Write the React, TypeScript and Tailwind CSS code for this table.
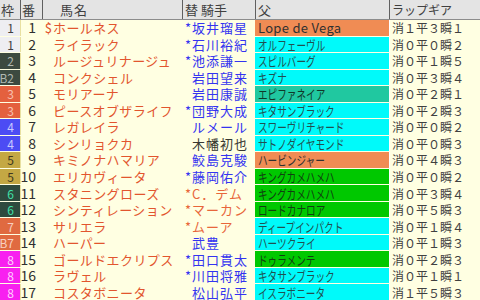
import React from 'react';

type Row = {
  waku: string;
  ban: number;
  name: string;
  mark?: string;
  jockey: string;
  star: boolean;
  jc: 'jp' | 'dark' | 'gaijin';
  sire: string;
  sc: 'orange' | 'cyan' | 'teal' | 'green';
  lap: string;
};

const rows: Row[] = [
  { waku: '1', ban: 1, name: 'ホールネス', mark: '$', jockey: '坂井瑠星', star: true, jc: 'jp', sire: 'Lope de Vega', sc: 'orange', lap: '消１平３瞬１' },
  { waku: '1', ban: 2, name: 'ライラック', jockey: '石川裕紀', star: true, jc: 'jp', sire: 'オルフェーヴル', sc: 'cyan', lap: '消０平０瞬２' },
  { waku: '2', ban: 3, name: 'ルージュリナージュ', jockey: '池添謙一', star: true, jc: 'jp', sire: 'スピルバーグ', sc: 'cyan', lap: '消０平１瞬５' },
  { waku: 'B2', ban: 4, name: 'コンクシェル', jockey: '岩田望来', star: false, jc: 'jp', sire: 'キズナ', sc: 'cyan', lap: '消０平３瞬４' },
  { waku: '3', ban: 5, name: 'モリアーナ', jockey: '岩田康誠', star: false, jc: 'jp', sire: 'エピファネイア', sc: 'teal', lap: '消０平２瞬１' },
  { waku: '3', ban: 6, name: 'ピースオブザライフ', jockey: '団野大成', star: true, jc: 'jp', sire: 'キタサンブラック', sc: 'cyan', lap: '消０平２瞬３' },
  { waku: '4', ban: 7, name: 'レガレイラ', jockey: 'ルメール', star: false, jc: 'jp', sire: 'スワーヴリチャード', sc: 'cyan', lap: '消０平０瞬２' },
  { waku: '4', ban: 8, name: 'シンリョクカ', jockey: '木幡初也', star: false, jc: 'dark', sire: 'サトノダイヤモンド', sc: 'cyan', lap: '消０平０瞬３' },
  { waku: '5', ban: 9, name: 'キミノナハマリア', jockey: '鮫島克駿', star: false, jc: 'jp', sire: 'ハービンジャー', sc: 'orange', lap: '消０平４瞬３' },
  { waku: '5', ban: 10, name: 'エリカヴィータ', jockey: '藤岡佑介', star: true, jc: 'jp', sire: 'キングカメハメハ', sc: 'green', lap: '消０平０瞬２' },
  { waku: '6', ban: 11, name: 'スタニングローズ', jockey: 'C．デム', star: true, jc: 'gaijin', sire: 'キングカメハメハ', sc: 'green', lap: '消０平３瞬４' },
  { waku: '6', ban: 12, name: 'シンティレーション', jockey: 'マーカン', star: true, jc: 'gaijin', sire: 'ロードカナロア', sc: 'green', lap: '消０平５瞬３' },
  { waku: '7', ban: 13, name: 'サリエラ', jockey: 'ムーア', star: true, jc: 'gaijin', sire: 'ディープインパクト', sc: 'cyan', lap: '消０平１瞬４' },
  { waku: 'B7', ban: 14, name: 'ハーパー', jockey: '武豊', star: false, jc: 'jp', sire: 'ハーツクライ', sc: 'cyan', lap: '消０平１瞬３' },
  { waku: '8', ban: 15, name: 'ゴールドエクリプス', jockey: '田口貫太', star: true, jc: 'jp', sire: 'ドゥラメンテ', sc: 'green', lap: '消０平２瞬３' },
  { waku: '8', ban: 16, name: 'ラヴェル', jockey: '川田将雅', star: true, jc: 'jp', sire: 'キタサンブラック', sc: 'cyan', lap: '消０平１瞬１' },
  { waku: '8', ban: 17, name: 'コスタボニータ', jockey: '松山弘平', star: false, jc: 'jp', sire: 'イスラボニータ', sc: 'cyan', lap: '消１平５瞬３' },
];

const wakuStyle: Record<string, string> = {
  '1': 'bg-[#eeeef2] text-[#404040]',
  '2': 'bg-[#3c4a40] text-[#b0b8b0]',
  '3': 'bg-[#e4603e] text-[#f8c0b0]',
  '4': 'bg-[#4c4cf4] text-[#c8c8ff]',
  '5': 'bg-[#c4a844] text-[#403820]',
  '6': 'bg-[#2e4a3e] text-[#40e0a8]',
  '7': 'bg-[#e06a40] text-[#f8d0c0]',
  '8': 'bg-[#f820f0] text-[#ffd0ff]',
};

const sireStyle = {
  orange: 'bg-[#f08c54] text-[#303030]',
  cyan: 'bg-[#00fafa] text-[#205050]',
  teal: 'bg-[#20c8a0] text-[#103828]',
  green: 'bg-[#00c800] text-[#104010]',
};

const jockeyColor = {
  jp: 'text-[#3434f0]',
  dark: 'text-[#383830]',
  gaijin: 'text-[#e8663a]',
};

const cols = 'grid grid-cols-[20px_22px_140px_73px_134px_91px]';
const font = { fontFamily: '"Noto Sans CJK JP", "Noto Sans", sans-serif' };

export default function App() {
  return (
    <div className="w-[480px] h-[300px] overflow-hidden bg-[#ffffe2]" style={font}>
      <div className={`${cols} h-[20px] bg-[#e4e4e4] border-b border-[#8c8c8c] text-[13px] leading-[19px] text-[#404040]`}>
        <div className="pl-[1px]">枠</div>
        <div className="border-l border-[#606060] pl-[1px]">番</div>
        <div className="border-l border-[#606060] pl-[17px] tracking-[1px]">馬名</div>
        <div className="border-l border-[#606060] pl-[2px]">替 騎手</div>
        <div className="border-l border-[#606060] pl-[2px]">父</div>
        <div className="border-l border-[#606060] pl-[2px] text-[12px]">ラップギア</div>
      </div>
      <div className="grid grid-rows-[repeat(17,minmax(0,1fr))] gap-px h-[280px]">
        {rows.map(r => {
          const wk = r.waku.replace('B', '');
          const latin = /^[\x20-\x7e]+$/.test(r.sire);
          return (
            <div key={r.ban} className={`${cols} min-h-0 text-[13px] leading-[15px]`}>
              <div className={`${wakuStyle[wk]} flex items-center justify-end pr-[6px] text-[12px]`}>{r.waku}</div>
              <div className="border-l border-[#e8e0a0] flex items-center justify-end pr-[6px] text-[14px] text-[#303030]">{r.ban}</div>
              <div className="flex items-center pl-[2px] text-[#e2552e] whitespace-nowrap tracking-[0.4px]">
                <span className="w-[9px] text-center">{r.mark ?? ''}</span>
                <span>{r.name}</span>
              </div>
              <div className={`${jockeyColor[r.jc]} flex items-center pl-[3px] whitespace-nowrap`}>
                <span className="w-[7px]">{r.star ? '*' : ''}</span>
                <span className="tracking-[1px]">{r.jockey}</span>
              </div>
              <div className={`${sireStyle[r.sc]} flex items-center pl-[3px] whitespace-nowrap overflow-hidden`}>
                {latin
                  ? <span className="tracking-[0.3px]">{r.sire}</span>
                  : <span className="inline-block origin-left scale-x-[0.74]">{r.sire}</span>}
              </div>
              <div className="border-l border-white flex items-center pl-[2px] text-[12px] text-[#404040] whitespace-nowrap">{r.lap}</div>
            </div>
          );
        })}
      </div>
    </div>
  );
}
